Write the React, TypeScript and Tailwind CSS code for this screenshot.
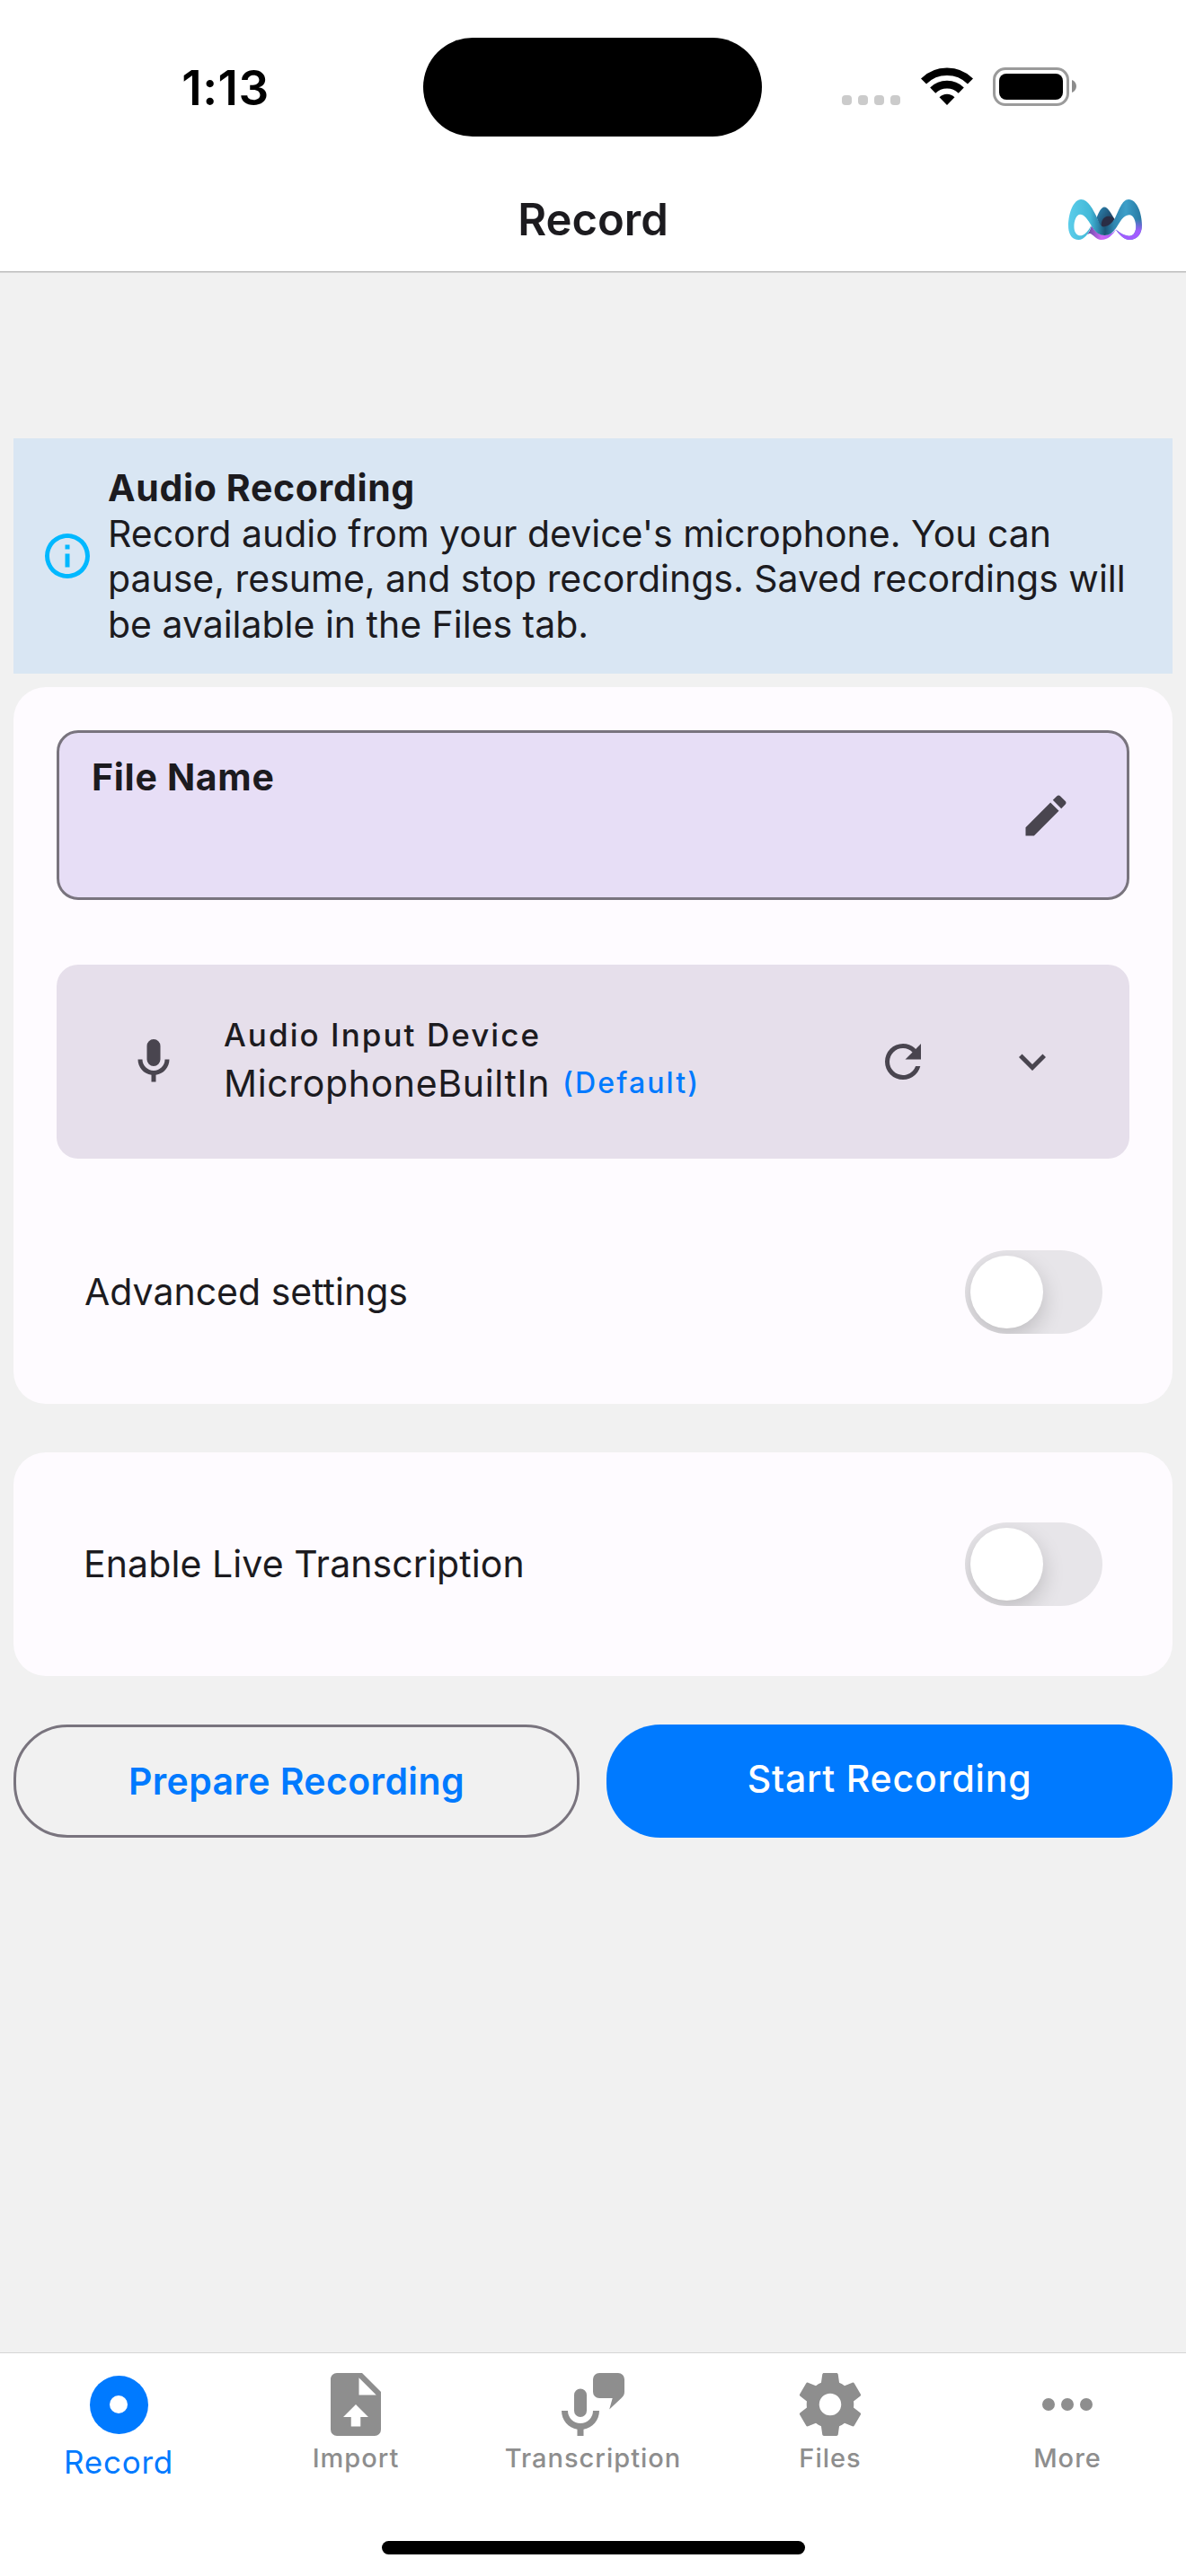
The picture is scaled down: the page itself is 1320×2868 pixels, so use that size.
import type { ReactNode } from "react";

const paths = {
  info: "M11,9H13V7H11M12,20C7.59,20 4,16.41 4,12C4,7.59 7.59,4 12,4C16.41,4 20,7.59 20,12C20,16.41 16.41,20 12,20M12,2A10,10 0 0,0 2,12A10,10 0 0,0 12,22A10,10 0 0,0 22,12A10,10 0 0,0 12,2M11,17H13V11H11V17Z",
  pencil:
    "M20.71,7.04C21.1,6.65 21.1,6 20.71,5.63L18.37,3.29C18,2.9 17.35,2.9 16.96,3.29L15.12,5.12L18.87,8.87M3,17.25V21H6.75L17.81,9.93L14.06,6.18L3,17.25Z",
  mic: "M12,2A3,3 0 0,1 15,5V11A3,3 0 0,1 12,14A3,3 0 0,1 9,11V5A3,3 0 0,1 12,2M19,11C19,14.53 16.39,17.44 13,17.93V21H11V17.93C7.61,17.44 5,14.53 5,11H7A5,5 0 0,0 12,16A5,5 0 0,0 17,11H19Z",
  refresh:
    "M17.65,6.35C16.2,4.9 14.21,4 12,4A8,8 0 0,0 4,12A8,8 0 0,0 12,20C15.73,20 18.84,17.45 19.73,14H17.65C16.83,16.33 14.61,18 12,18A6,6 0 0,1 6,12A6,6 0 0,1 12,6C13.66,6 15.14,6.69 16.22,7.78L13,11H20V4L17.65,6.35Z",
  chevron: "M7.41,8.58L12,13.17L16.59,8.58L18,10L12,16L6,10L7.41,8.58Z",
  fileUpload:
    "M14,2H6C4.89,2 4,2.89 4,4V20A2,2 0 0,0 6,22H18A2,2 0 0,0 20,20V8L14,2M13.5,16V19H10.5V16H8L12,12L16,16H13.5M13,9V3.5L18.5,9H13Z",
  micMessage:
    "M14,2H20A2,2 0 0,1 22,4V8C22,8.9 21.6,9.4 21,10L17.2,13.6L18.2,10H14A2,2 0 0,1 12,8V4A2,2 0 0,1 14,2ZM8,7A2,2 0 0,1 10,9V14A2,2 0 0,1 6,14V9A2,2 0 0,1 8,7M14,14C14,17 11.84,19.44 9,19.92V22H7V19.92C4.16,19.44 2,17 2,14H4A4,4 0 0,0 12,14H14Z",
  cog: "M12,15.5A3.5,3.5 0 0,1 8.5,12A3.5,3.5 0 0,1 12,8.5A3.5,3.5 0 0,1 15.5,12A3.5,3.5 0 0,1 12,15.5M19.43,12.97C19.47,12.65 19.5,12.33 19.5,12C19.5,11.67 19.47,11.34 19.43,11L21.54,9.37C21.73,9.22 21.78,8.95 21.66,8.73L19.66,5.27C19.54,5.05 19.27,4.96 19.05,5.05L16.56,6.05C16.04,5.66 15.5,5.32 14.87,5.07L14.5,2.42C14.46,2.18 14.25,2 14,2H10C9.75,2 9.54,2.18 9.5,2.42L9.13,5.07C8.5,5.32 7.96,5.66 7.44,6.05L4.95,5.05C4.73,4.96 4.46,5.05 4.34,5.27L2.34,8.73C2.21,8.95 2.27,9.22 2.46,9.37L4.57,11C4.53,11.34 4.5,11.67 4.5,12C4.5,12.33 4.53,12.65 4.57,12.97L2.46,14.63C2.27,14.78 2.21,15.05 2.34,15.27L4.34,18.73C4.46,18.95 4.73,19.03 4.95,18.95L7.44,17.94C7.96,18.34 8.5,18.68 9.13,18.93L9.5,21.58C9.54,21.82 9.75,22 10,22H14C14.25,22 14.46,21.82 14.5,21.58L14.87,18.93C15.5,18.67 16.04,18.34 16.56,17.94L19.05,18.95C19.27,19.03 19.54,18.95 19.66,18.73L21.66,15.27C21.78,15.05 21.73,14.78 21.54,14.63L19.43,12.97Z",
  dots: "M16,12A2,2 0 0,1 18,10A2,2 0 0,1 20,12A2,2 0 0,1 18,14A2,2 0 0,1 16,12M10,12A2,2 0 0,1 12,10A2,2 0 0,1 14,12A2,2 0 0,1 12,14A2,2 0 0,1 10,12M4,12A2,2 0 0,1 6,10A2,2 0 0,1 8,12A2,2 0 0,1 6,14A2,2 0 0,1 4,12Z",
};

function Icon({ d, className }: { d: string; className: string }) {
  return (
    <svg viewBox="0 0 24 24" fill="currentColor" className={className}>
      <path d={d} />
    </svg>
  );
}

function Logo() {
  const band =
    "M88,183 C88,140 106,95 130,95 C155,95 170,130 183,155 C188,168 193,182 203,186 C218,184 230,178 242,158 C255,135 265,95 288,95 C315,95 332,140 332,180 C332,210 315,229 292,229 C270,229 258,212 245,195 C262,208 275,216 290,216 C305,216 312,202 312,185 C312,165 303,146 290,146 C270,146 258,172 246,190 C235,206 225,214 208,214 C190,214 178,204 165,183 C152,162 142,145 127,145 C115,145 107,165 107,185 C107,203 115,215 128,215 C140,215 155,200 163,182 C163,195 145,229 122,229 C100,229 88,210 88,183Z";
  return (
    <svg viewBox="88 95 244 134" className="h-[45px] w-[82px]">
      <defs>
        <linearGradient id="band" x1="88" y1="0" x2="332" y2="0" gradientUnits="userSpaceOnUse">
          <stop offset="0" stopColor="#5bcdea" />
          <stop offset="0.3" stopColor="#43b9d8" />
          <stop offset="0.4" stopColor="#2f8bb0" />
          <stop offset="0.5" stopColor="#1c5577" />
          <stop offset="0.62" stopColor="#2f86b0" />
          <stop offset="0.78" stopColor="#3d9fc9" />
          <stop offset="1" stopColor="#2677a0" />
        </linearGradient>
        <linearGradient id="tail" x1="0" y1="160" x2="0" y2="200" gradientUnits="userSpaceOnUse">
          <stop offset="0" stopColor="#a25cff" stopOpacity="0" />
          <stop offset="1" stopColor="#a25cff" />
        </linearGradient>
        <linearGradient id="under" x1="150" y1="0" x2="245" y2="0" gradientUnits="userSpaceOnUse">
          <stop offset="0" stopColor="#5b4a9c" />
          <stop offset="0.5" stopColor="#d067f5" />
          <stop offset="1" stopColor="#a25cff" />
        </linearGradient>
        <linearGradient id="peak" x1="190" y1="130" x2="235" y2="160" gradientUnits="userSpaceOnUse">
          <stop offset="0" stopColor="#2a7da8" />
          <stop offset="1" stopColor="#1d3f60" />
        </linearGradient>
        <clipPath id="right">
          <path d="M300,90 H350 V240 H240 V194 H275 L300,150Z" />
        </clipPath>
      </defs>
      <path
        fill="url(#under)"
        d="M150,211 C158,205 162,190 165,182 C175,200 190,213 208,213 C225,213 238,205 247,194 C235,212 220,229 197,229 C180,229 170,210 160,208 C156,208 153,210 150,211Z"
      />
      <path fill="url(#peak)" d="M182,155 C190,135 198,120 207,120 C220,120 230,142 241,160 L225,190 L195,190Z" />
      <path fill="#2a2d45" d="M198,182 C196,165 206,152 220,151 C230,151 236,156 241,160 L228,188 L205,190Z" />
      <path fill="url(#band)" d={band} />
      <path fill="url(#tail)" d={band} clipPath="url(#right)" />
    </svg>
  );
}

function Wifi() {
  return (
    <svg viewBox="0 0 58 42" className="ml-[23px] h-[42px] w-[58px]">
      <g fill="none" stroke="#000" strokeWidth="8.6">
        <path d="M3,15.5 A37,37 0 0 1 55,15.5" />
        <path d="M13.2,25.6 A22.5,22.5 0 0 1 44.8,25.6" />
      </g>
      <path d="M29,42 L20.5,33.2 A12,12 0 0 1 37.5,33.2Z" />
    </svg>
  );
}

function StatusBar() {
  return (
    <div className="flex h-[194px] items-start">
      <div className="mt-[66px] w-[471px] pl-[31px] text-center text-[53px] leading-[64px] font-semibold tracking-[0.5px] text-black">
        1:13
      </div>
      <div className="mt-[42px] h-[110px] w-[377px] rounded-[55px] bg-black" />
      <div className="mt-[75px] ml-[89px] flex h-[43px] items-start">
        <div className="mt-[31px] flex gap-[7px]">
          {[0, 1, 2, 3].map((i) => (
            <div key={i} className="h-[11px] w-[11px] rounded-[4px] bg-[#cbcbcb]" />
          ))}
        </div>
        <Wifi />
        <div className="ml-[22px] flex h-[43px] w-[85px] items-center justify-center rounded-[14px] border-[3px] border-[#9b9b9b]">
          <div className="h-[29px] w-[71px] rounded-[8px] bg-black" />
        </div>
        <svg viewBox="0 0 5 14" className="mt-[14px] ml-[3px] h-[14px] w-[5px]">
          <path d="M0,0 C3,1 5,4 5,7 C5,10 3,13 0,14Z" fill="#8c8c8c" />
        </svg>
      </div>
    </div>
  );
}

function Toggle() {
  return (
    <div className="flex h-[93px] w-[153px] items-center overflow-hidden rounded-full bg-[#e7e5e9] pl-[6px]">
      <div className="h-[81px] w-[81px] rounded-full bg-white shadow-[0_9px_24px_rgba(0,0,0,0.18)]" />
    </div>
  );
}

function Tab({ label, children, active }: { label: string; children: ReactNode; active?: boolean }) {
  return (
    <div className={active ? "flex w-[264px] flex-col items-center text-[#007aff]" : "flex w-[264px] flex-col items-center text-[#8e8e8e]"}>
      <div className="mt-[15px] flex h-[84px] items-center">{children}</div>
      <div
        className={
          active
            ? "text-[35px] leading-[44px] tracking-[0.8px]"
            : "text-[29px] leading-[36px] font-medium tracking-[1px]"
        }
      >
        {label}
      </div>
    </div>
  );
}

export default function App() {
  return (
    <div className="flex h-[2868px] w-[1320px] flex-col overflow-hidden bg-[#f1f1f1] font-['Inter',sans-serif] text-[#1c1b1f]">
      <header className="h-[303px] shrink-0 border-b border-[#b8b8b8] bg-white shadow-[0_1px_0_#dcdcdc]">
        <StatusBar />
        <div className="grid h-[101px] grid-cols-3 items-center">
          <div />
          <h1 className="text-center text-[49px] leading-[60px] font-semibold">Record</h1>
          <div className="flex justify-end pr-[49px]">
            <Logo />
          </div>
        </div>
      </header>

      <main className="flex flex-1 flex-col px-[15px] pt-[185px]">
        <section className="flex h-[262px] items-center bg-[#d9e6f3] pl-[30px]">
          <Icon d={paths.info} className="h-[60px] w-[60px] text-[#00b8ff]" />
          <div className="ml-[15px] text-[41px] leading-[50.5px] whitespace-nowrap">
            <h2 className="font-bold tracking-[0.65px]">Audio Recording</h2>
            <p className="tracking-[-0.02px]">
              Record audio from your device's microphone. You can
              <br />
              pause, resume, and stop recordings. Saved recordings will
              <br />
              be available in the Files tab.
            </p>
          </div>
        </section>

        <section className="mt-[15px] h-[798px] rounded-[36px] bg-[#fefbff] px-[48px] pt-[48px]">
          <div className="flex h-[189px] justify-between rounded-[24px] border-[3px] border-[#79747e] bg-[#e7def6] pr-[60px] pl-[36px]">
            <div className="pt-[24px] text-[41px] leading-[51px] font-bold tracking-[0.7px]">File Name</div>
            <Icon d={paths.pencil} className="mt-[62px] h-[60px] w-[60px] text-[#49454f]" />
          </div>

          <div className="mt-[72px] flex h-[216px] items-center rounded-[24px] bg-[#e6dfeb] pr-[78px] pl-[78px]">
            <Icon d={paths.mic} className="h-[60px] w-[60px] text-[#49454f]" />
            <div className="ml-[48px] flex-1">
              <div className="text-[35px] leading-[48px] font-medium tracking-[2.05px]">Audio Input Device</div>
              <div className="flex items-center text-[41px] leading-[60px] tracking-[0.65px]">
                MicrophoneBuiltIn
                <span className="ml-[14px] text-[32px] font-medium tracking-[2.1px] text-[#007aff]">(Default)</span>
              </div>
            </div>
            <Icon d={paths.refresh} className="h-[60px] w-[60px] text-[#49454f]" />
            <Icon d={paths.chevron} className="ml-[84px] h-[60px] w-[60px] text-[#49454f]" />
          </div>

          <div className="mt-[102px] flex h-[93px] items-center justify-between pr-[30px] pl-[31px] text-[41px]">
            Advanced settings
            <Toggle />
          </div>
        </section>

        <section className="mt-[54px] flex h-[249px] items-center justify-between rounded-[36px] bg-[#fefbff] pr-[78px] pl-[78px] text-[41px] tracking-[0.1px]">
          Enable Live Transcription
          <Toggle />
        </section>

        <div className="mt-[54px] grid grid-cols-2 gap-[30px] text-[41px] leading-[50px]">
          <button className="flex h-[126px] items-center justify-center rounded-[60px] border-[3px] border-[#79747e] font-semibold tracking-[0.4px] text-[#007aff]">
            Prepare Recording
          </button>
          <button className="flex h-[126px] items-center justify-center rounded-[60px] bg-[#007aff] pb-[6px] font-medium tracking-[0.8px] text-white">
            Start Recording
          </button>
        </div>
      </main>

      <footer className="flex h-[249px] shrink-0 flex-col items-center border-t border-[#d5d5d5] bg-white">
        <nav className="flex h-[209px] w-full">
          <Tab label="Record" active>
            <div className="flex h-[65px] w-[65px] items-center justify-center rounded-full bg-[#007aff]">
              <div className="h-[20px] w-[20px] rounded-full bg-white" />
            </div>
          </Tab>
          <Tab label="Import">
            <Icon d={paths.fileUpload} className="h-[84px] w-[84px]" />
          </Tab>
          <Tab label="Transcription">
            <Icon d={paths.micMessage} className="h-[84px] w-[84px]" />
          </Tab>
          <Tab label="Files">
            <Icon d={paths.cog} className="h-[84px] w-[84px]" />
          </Tab>
          <Tab label="More">
            <Icon d={paths.dots} className="h-[84px] w-[84px]" />
          </Tab>
        </nav>
        <div className="h-[15px] w-[471px] rounded-full bg-black" />
      </footer>
    </div>
  );
}
